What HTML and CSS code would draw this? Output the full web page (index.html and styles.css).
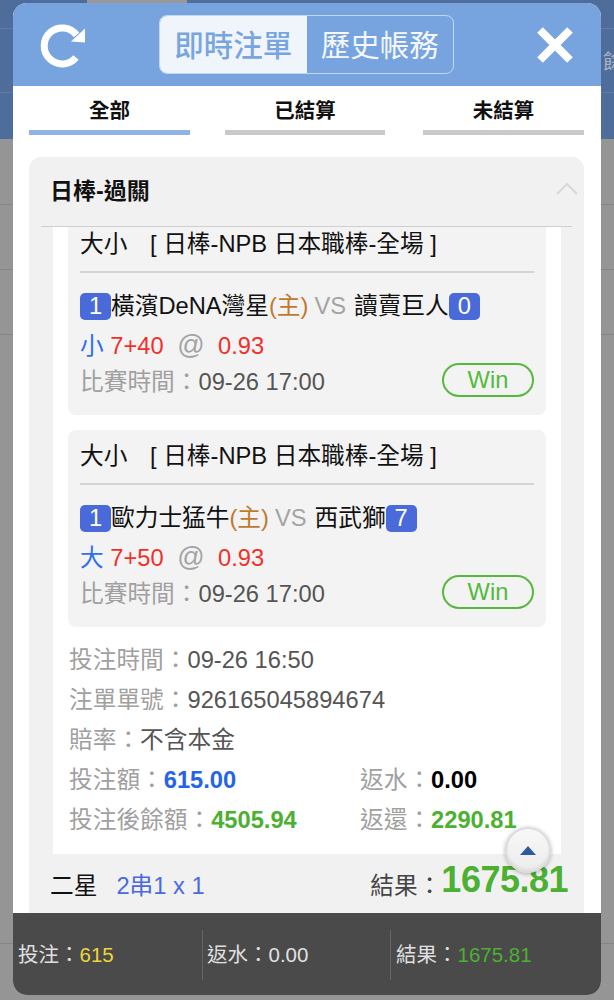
FILE: index.html
```html
<!DOCTYPE html>
<html lang="zh-Hant">
<head>
<meta charset="utf-8">
<title>即時注單</title>
<link rel="stylesheet" href="styles.css">
</head>
<body>
<div class="backdrop">
  <div class="bd-blue">
    <div class="bd-row bd-row-a"><span class="bd-tab"></span></div>
    <div class="bd-row bd-row-b"><span class="bd-side">餘</span></div>
  </div>
  <div class="bd-gray">
    <div class="bd-line bd-line-a"></div>
    <div class="bd-line"></div>
    <div class="bd-line"></div>
    <div class="bd-line bd-line-z"></div>
  </div>
</div>

<div class="modal">
  <header class="head">
    <svg class="icon-refresh" viewBox="0 0 46 46" width="46" height="46" aria-hidden="true">
      <path d="M36 35.5A18 18 0 1 1 36.5 13" fill="none" stroke="#fff" stroke-width="7"/>
      <path d="M45 6.5V20.5L31 19.5Z" fill="#fff"/>
    </svg>
    <div class="seg">
      <span class="seg-item seg-on">即時注單</span>
      <span class="seg-item">歷史帳務</span>
    </div>
    <svg class="icon-close" viewBox="0 0 40 40" width="40" height="40" aria-hidden="true">
      <path d="M5 5L35 35M35 5L5 35" stroke="#fff" stroke-width="8" fill="none"/>
    </svg>
  </header>

  <nav class="tabs">
    <div class="tab tab-on">全部</div>
    <div class="tab">已結算</div>
    <div class="tab">未結算</div>
  </nav>

  <section class="card">
    <div class="card-head">
      <span class="card-title">日棒-過關</span>
      <svg class="chev" viewBox="0 0 22 12" width="22" height="12" aria-hidden="true">
        <path d="M1 11L11 1L21 11" fill="none" stroke="#d8d8d8" stroke-width="2"/>
      </svg>
    </div>
    <div class="panel">
      <div class="panel-inner">
        <article class="bet">
          <div class="bet-title"><span class="bet-type">大小</span><span>[ 日棒-NPB 日本職棒-全場 ]</span></div>
          <div class="teams"><span class="score">1</span>橫濱DeNA灣星<span class="home">(主)</span><span class="vs">VS</span>讀賣巨人<span class="score">0</span></div>
          <div class="odds"><span class="pick">小</span> <span class="red">7+40</span><span class="at">@</span><span class="red">0.93</span></div>
          <div class="time-row"><span><span class="lbl">比賽時間：</span><span class="val">09-26 17:00</span></span><span class="win">Win</span></div>
        </article>
        <article class="bet">
          <div class="bet-title"><span class="bet-type">大小</span><span>[ 日棒-NPB 日本職棒-全場 ]</span></div>
          <div class="teams"><span class="score">1</span>歐力士猛牛<span class="home">(主)</span><span class="vs">VS</span>西武獅<span class="score">7</span></div>
          <div class="odds"><span class="pick">大</span> <span class="red">7+50</span><span class="at">@</span><span class="red">0.93</span></div>
          <div class="time-row"><span><span class="lbl">比賽時間：</span><span class="val">09-26 17:00</span></span><span class="win">Win</span></div>
        </article>
        <div class="details">
          <div class="d-row"><span class="lbl">投注時間：</span><span class="val">09-26 16:50</span></div>
          <div class="d-row"><span class="lbl">注單單號：</span><span class="val">926165045894674</span></div>
          <div class="d-row"><span class="lbl">賠率：</span><span class="val">不含本金</span></div>
          <div class="d-row d-two">
            <div><span class="lbl">投注額：</span><b class="blue">615.00</b></div>
            <div><span class="lbl">返水：</span><b class="black">0.00</b></div>
          </div>
          <div class="d-row d-two">
            <div><span class="lbl">投注後餘額：</span><b class="green">4505.94</b></div>
            <div><span class="lbl">返還：</span><b class="green">2290.81</b></div>
          </div>
        </div>
      </div>
      <button class="to-top" aria-label="top"><span class="tri"></span></button>
    </div>
    <div class="sum">
      <div class="sum-left"><span>二星</span><span class="combo">2串1 x 1</span></div>
      <div class="sum-right"><span class="sum-lbl">結果：</span><b class="sum-num">1675.81</b></div>
    </div>
  </section>

  <footer class="foot">
    <div class="foot-cell">投注：<span class="yellow">615</span></div>
    <div class="foot-cell">返水：0.00</div>
    <div class="foot-cell">結果：<span class="fgreen">1675.81</span></div>
  </footer>
</div>
</body>
</html>
```

FILE: styles.css
```css
* { box-sizing: border-box; }
html, body { margin: 0; padding: 0; }
body {
  width: 614px;
  height: 1000px;
  overflow: hidden;
  position: relative;
  background: #959595;
  font-family: "Liberation Sans", "Noto Sans CJK TC", sans-serif;
  color: #111;
}

/* dimmed page behind the dialog */
.backdrop { height: 1000px; }
.bd-blue { height: 139px; background: #4f6d9b; }
.bd-row { border-bottom: 1px solid #5f7ba6; position: relative; }
.bd-row-a { height: 29px; }
.bd-row-b { height: 64px; }
.bd-tab { position: absolute; left: 87px; top: 0; width: 100px; height: 3px; background: #999; }
.bd-side { position: absolute; left: 603px; top: 17px; font-size: 20px; color: #a9b3c3; }
.bd-line { height: 65px; border-bottom: 1px solid #858585; }
.bd-line-a { height: 66px; }
.bd-line-z { height: 609px; }

/* dialog */
.modal {
  position: absolute;
  left: 13px;
  top: 3px;
  width: 588px;
  height: 992px;
  border-radius: 14px;
  overflow: hidden;
  background: #fff;
  display: flex;
  flex-direction: column;
}

.head {
  height: 83px;
  flex: none;
  background: #77a4df;
  display: flex;
  align-items: center;
  padding: 0 26px 0 27px;
  justify-content: space-between;
}
.icon-refresh { display: block; }
.icon-close { display: block; }
.seg {
  display: flex;
  width: 295px;
  height: 59px;
  margin-top: -1px;
  margin-right: 8px;
  border: 1px solid #c2d6f0;
  border-radius: 8px;
  overflow: hidden;
}
.seg-item {
  flex: 1;
  font-size: 29.5px;
  line-height: 59px;
  text-align: center;
  color: #f4f8fd;
}
.seg-on { background: #f0f5fb; color: #78a5e0; font-weight: 500; }

.tabs {
  height: 49px;
  flex: none;
  display: flex;
  padding: 0 17px 0 16px;
}
.tab {
  width: 161px;
  height: 49px;
  font-size: 20.5px;
  font-weight: bold;
  line-height: 50px;
  text-align: center;
  border-bottom: 5px solid #c9c9c9;
  color: #111;
}
.tab:nth-child(1) { margin-right: 35px; }
.tab:nth-child(2) { width: 160px; margin-right: 38px; }
.tab-on { border-bottom-color: #8fb5e6; }

.card {
  flex: 1;
  min-height: 0;
  margin: 22px 17px 0 16px;
  background: #f1f1f1;
  border-radius: 12px 12px 0 0;
  display: flex;
  flex-direction: column;
}
.card-head {
  height: 70px;
  flex: none;
  margin: 0 12px;
  padding: 0 0 6px 9px;
  border-bottom: 1px solid #cfcfcf;
  display: flex;
  align-items: center;
  justify-content: space-between;
}
.card-title { font-size: 23px; font-weight: bold; color: #111; }
.chev { display: block; margin-right: -6px; }

.panel {
  height: 627px;
  flex: none;
  margin: 0 23px 0 24px;
  background: #fff;
  position: relative;
}
.panel-inner {
  height: 627px;
  overflow: hidden;
  padding: 0 15px;
}
.bet {
  background: #f3f3f3;
  border-radius: 8px;
  height: 197px;
  padding: 0 12px;
  margin-top: -9px;
  font-size: 23.7px;
}
.bet + .bet { margin-top: 15px; }
.bet-title {
  height: 55px;
  line-height: 52px;
  border-bottom: 2px solid #d4d4d4;
  white-space: nowrap;
}
.bet-type { display: inline-block; width: 70px; }
.teams {
  display: flex;
  align-items: baseline;
  margin-top: 20px;
  height: 27px;
  line-height: 27px;
  white-space: nowrap;
}
.score {
  width: 31px;
  height: 27px;
  background: #4a6ad9;
  color: #fff;
  text-align: center;
  border-radius: 5px;
}
.home { color: #c07a30; }
.vs { color: #a3a3a3; margin: 0 8px 0 6px; }
.odds { margin-top: 10px; height: 30px; line-height: 30px; white-space: nowrap; }
.pick { color: #2e6ff0; }
.red { color: #f0312a; }
.at { color: #a3a3a3; margin: 0 13.5px; font-size: 27px; }
.time-row {
  display: flex;
  justify-content: space-between;
  align-items: center;
  margin-top: 2px;
  height: 36px;
}
.lbl { color: #a0a0a0; }
.val { color: #555; }
.win {
  width: 92px;
  height: 34px;
  border: 2px solid #55b93d;
  border-radius: 18px;
  color: #55b93d;
  text-align: center;
  line-height: 30px;
}

.details { padding: 13px 1px 0; font-size: 23.7px; }
.d-row { height: 40px; line-height: 40px; white-space: nowrap; }
.d-two { display: flex; }
.d-two > div:first-child { width: 291px; }
.blue { color: #2464e8; }
.black { color: #000; }
.green { color: #4cb032; }

.to-top {
  position: absolute;
  left: 452px;
  top: 600px;
  width: 46px;
  height: 46px;
  padding: 0;
  border-radius: 50%;
  border: 2px solid #dcdcdc;
  background: linear-gradient(#f8f8f8, #ececec);
  box-shadow: 0 1px 4px rgba(0,0,0,.3), inset 0 -2px 3px rgba(0,0,0,.06);
  display: flex;
  align-items: center;
  justify-content: center;
}
.tri {
  width: 0;
  height: 0;
  border-left: 8.5px solid transparent;
  border-right: 8.5px solid transparent;
  border-bottom: 9px solid #2f5a9e;
}

.sum {
  flex: 1;
  display: flex;
  justify-content: space-between;
  align-items: center;
  padding: 0 16px 0 21px;
  white-space: nowrap;
}
.sum-left { font-size: 23.7px; display: flex; gap: 19px; }
.combo { color: #4a6ae0; }
.sum-right { display: flex; align-items: center; }
.sum-lbl { font-size: 23.7px; color: #444; }
.sum-num { font-size: 36px; letter-spacing: -0.5px; color: #4cb032; margin-top: -8px; }

.foot {
  height: 82px;
  flex: none;
  background: #4a4a4a;
  display: flex;
  align-items: center;
  color: #e0e0e0;
  font-size: 20.5px;
  padding: 2px 0 0 5px;
}
.foot-cell {
  width: 188px;
  height: 50px;
  line-height: 50px;
  white-space: nowrap;
  border-right: 1px solid #666;
}
.foot-cell:first-child { width: 185px; }
.foot-cell + .foot-cell { padding-left: 4px; }
.foot-cell:last-child { border-right: 0; padding-left: 5px; }
.yellow { color: #f0d43a; }
.fgreen { color: #4cb032; }
```
